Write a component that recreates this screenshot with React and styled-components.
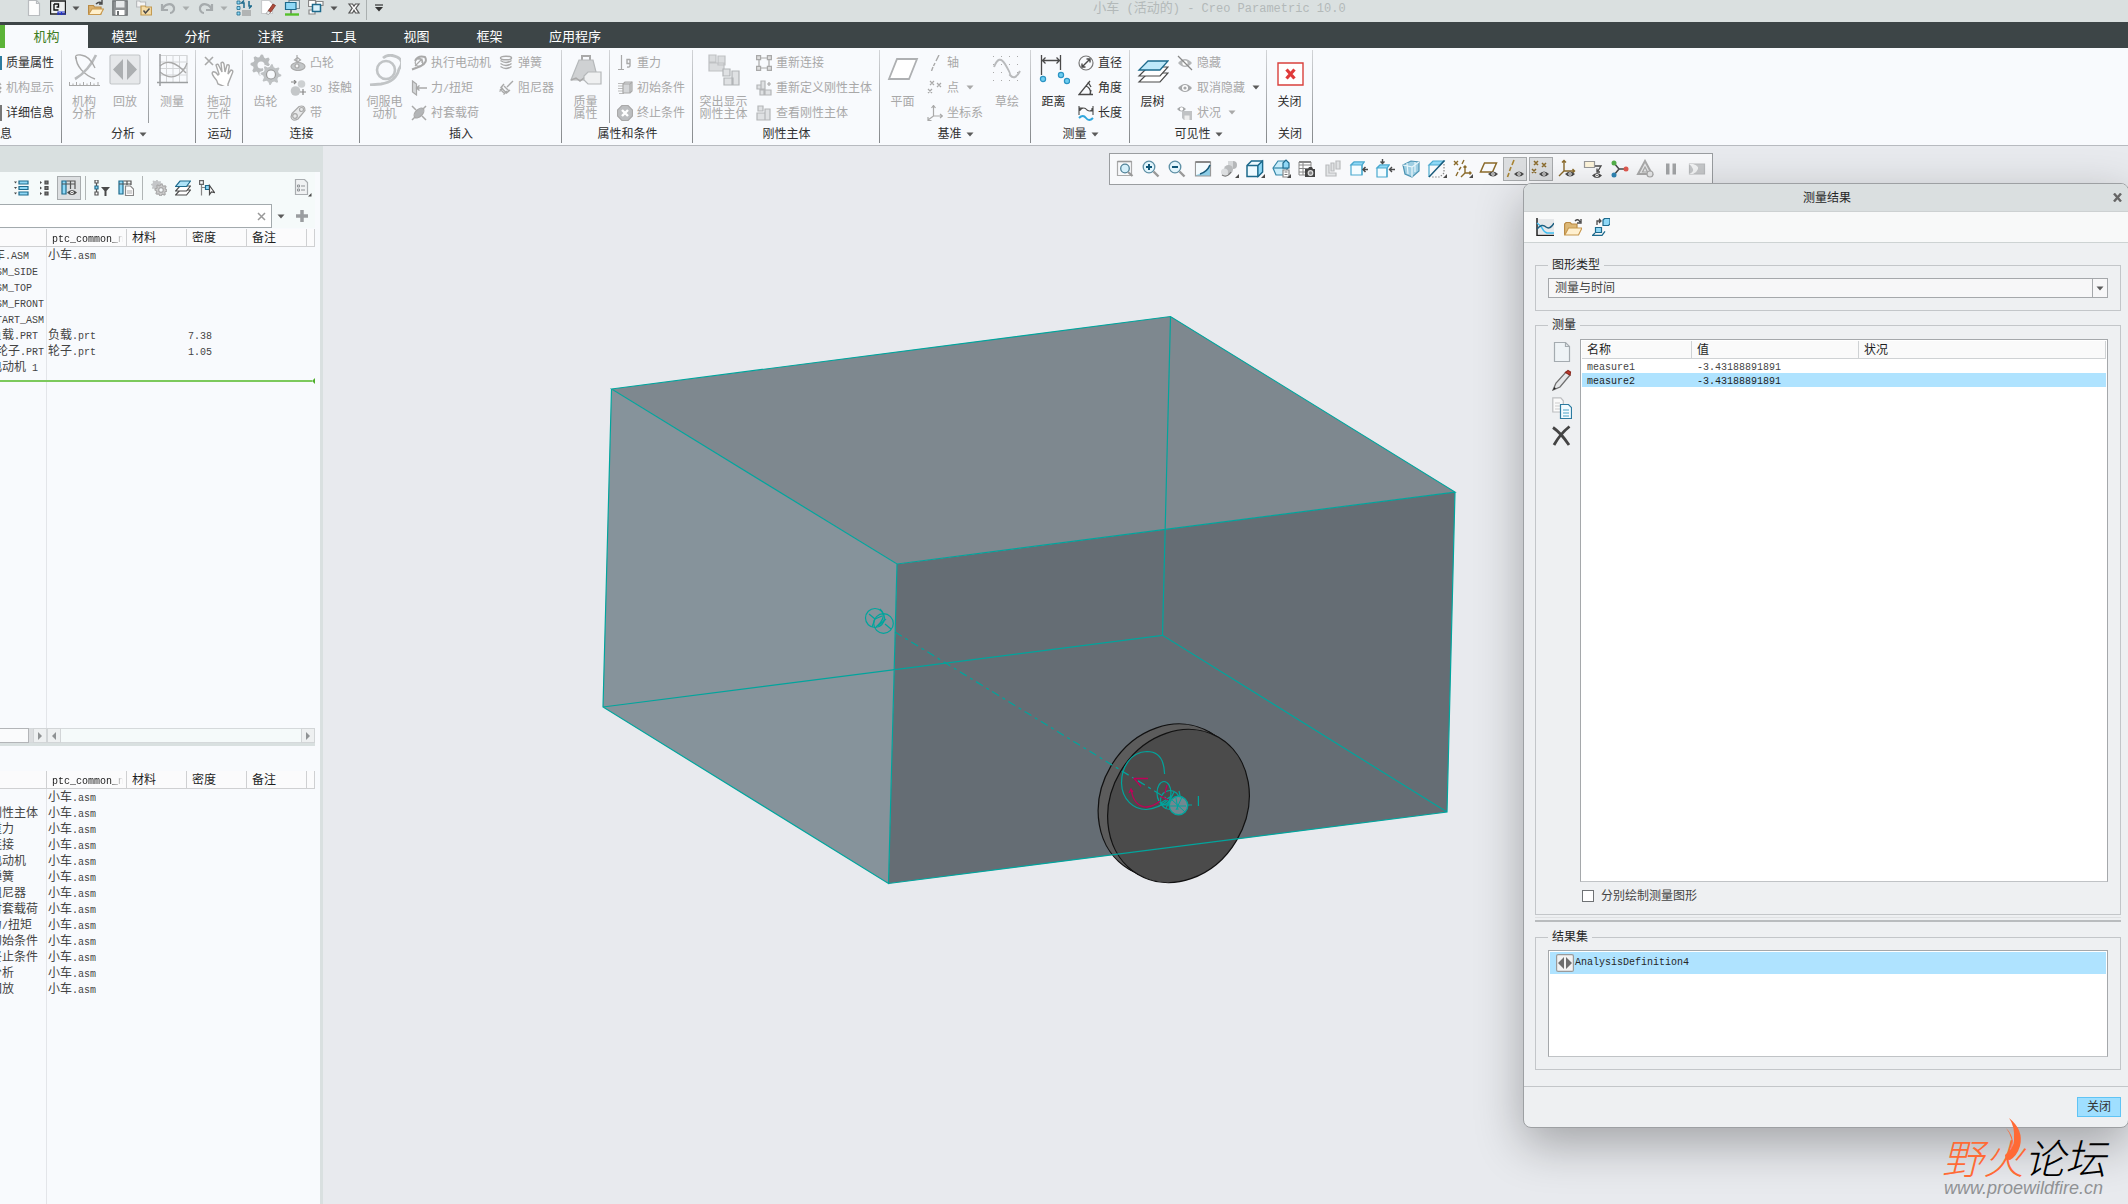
import React from "react";
import styled, { createGlobalStyle, css } from "styled-components";

const CJK = `"Liberation Sans", "Noto Sans CJK SC", sans-serif`;
const MONO = `"Liberation Mono", "Noto Sans CJK SC", monospace`;

const Global = createGlobalStyle`
  *, *::before, *::after { box-sizing: border-box; }
  html, body { margin: 0; padding: 0; }
  body { font-family: ${CJK}; font-size: 12px; line-height: 16px; color: #3c3c3c; background: #e8eaee; overflow: hidden; }
  button { font: inherit; color: inherit; border: 0; padding: 0; margin: 0; background: none; cursor: pointer; }
  svg { display: block; flex: none; }
`;

/* ---------- text ---------- */
const Latin = styled.span`
  font-family: ${MONO};
  font-size: ${(p) => p.$size || 10}px;
  line-height: 0;
  white-space: pre;
`;
const T = ({ children, size }) =>
  String(children)
    .split(/([\x20-\x7e]+)/)
    .filter(Boolean)
    .map((s, i) =>
      /^[\x20-\x7e]+$/.test(s) ? (
        <Latin key={i} $size={size}>{s}</Latin>
      ) : (
        <React.Fragment key={i}>{s}</React.Fragment>
      )
    );

/* ---------- icons ---------- */
const G = "#a9a9a9";
const L = "#d4d6d8";
const D = "#4a4a4a";
const B = "#1d6a8c";
const C = "#8fd8f6";

const Svg = ({ s = 16, w, h, vb, children }) => (
  <svg width={w || s} height={h || s} viewBox={vb || `0 0 ${s} ${s}`} fill="none" stroke={G} strokeWidth="1.2" aria-hidden="true">
    {children}
  </svg>
);
const Eye = ({ x = 8, y = 11 }) => (
  <g transform={`translate(${x} ${y})`} stroke="none">
    <path d="M0 3Q5-2 10 3Q5 8 0 3Z" fill={D} />
    <circle cx="5" cy="3" r="1.7" fill="#fff" />
    <circle cx="5" cy="3" r=".8" fill={D} />
  </g>
);
const Corner = () => <path d="M20 15v4h-4z" fill={D} stroke="none" />;
const Caret = ({ c = "#5a5a5a" }) => (
  <svg width="8" height="5" viewBox="0 0 8 5" aria-hidden="true"><path d="M0.5 0.5h7L4 4.5z" fill={c} /></svg>
);

const cog = (cx, cy, r, n = 8) => {
  const pts = [];
  for (let i = 0; i < n * 4; i++) {
    const a = (i / (n * 4)) * Math.PI * 2;
    const rr = i % 4 < 2 ? r : r * 0.76;
    pts.push(`${(cx + rr * Math.cos(a)).toFixed(1)},${(cy + rr * Math.sin(a)).toFixed(1)}`);
  }
  return pts.join(" ");
};

const I = {
  page: <Svg><path d="M2.5.5h8l3 3v12h-11z" fill="#fdfdfd" stroke="#b9bcbf" /><path d="M10.500.5v3h3" stroke="#b9bcbf" /></Svg>,
  logo: <Svg><path d="M.5 1h15v13H.5z" fill="#eef0f0" stroke="#222" strokeWidth="1.4" /><path d="M4 4h4.500v3H6.500M4 4v6h4.500" stroke="#111" strokeWidth="1.4" /><path d="M8 15v-3h7M8 14h8M11.500 12v3" stroke="#2030d0" strokeWidth="1.2" /></Svg>,
  folder: <Svg><path d="M.5 14V5.500h5l1 1.500H13v7z" fill="#d9b06c" stroke="#b98a45" /><path d="M.5 14.500L4 9h11.500l-3 5.500z" fill="#fff0cc" stroke="#c8994f" /><path d="M8 4q3-3 6-1M14 0v4h-3" stroke={D} strokeWidth="1.4" /></Svg>,
  save: <Svg><path d="M.8.800h14.400v14.400H.8z" fill="#8d9193" stroke="#6c7072" /><path d="M4 1h8.500v6.500H4z" fill="#e6e9ea" stroke="none" /><path d="M3.500 10h9V15h-9z" fill="#fff" stroke="none" /><path d="M5 11h2v4H5z" fill="#6c7072" stroke="none" /></Svg>,
  openCheck: <Svg><path d="M.6 7V1h3l1 1h5v5z" fill="#f4f4f4" stroke="#b7babc" /><path d="M5 15V6h4l1 1h5.500v8z" fill="#f5dca6" stroke="#c39b52" /><path d="M7.500 10.500l2 2.500 4-4.500" stroke={D} strokeWidth="1.500" /></Svg>,
  undo: <Svg><path d="M2 4v6h6M2.500 9.500C4 4 12 2 14 7.500c.5 3-1.500 5.500-4 5.500" stroke="#a6abad" strokeWidth="2.200" /></Svg>,
  redo: <Svg><path d="M14 4v6H8M13.500 9.500C12 4 4 2 2 7.500c-.5 3 1.500 5.500 4 5.500" stroke="#a6abad" strokeWidth="2.200" /></Svg>,
  regen: <Svg><path d="M1 1h3v3H1zM1 6.500h3v3H1zM1 12h3v3H1z" fill={C} stroke={B} strokeWidth=".8" /><path d="M6 11h9M6 13h9M6 15h9" stroke="#888" /><path d="M8 8V3H5.500L8 .5M13 1v5h2.500L13 8.500" stroke={B} strokeWidth="1.500" /></Svg>,
  erase: <Svg><path d="M1.500.5h8l3 3v10h-11z" fill="#fff" stroke="#c9cbcd" /><path d="M8 11l5-7 2.500 1.500-5 7z" fill="#b04a3a" stroke="#7a3228" strokeWidth=".8" /><path d="M8 11l2.500 1.500-2 2-2.500-1z" fill="#ececec" stroke="#888" strokeWidth=".6" /></Svg>,
  windows: <Svg><path d="M5 .5h10.500v8H5z" fill="#dfe8ec" stroke="#7d8d94" /><path d="M1.500 2.500h10.500v7H1.500z" fill="#8fd8f6" stroke={B} /><path d="M7 10v4" stroke={D} /><path d="M1 14.500h14" stroke="#55c02a" strokeWidth="2.400" /></Svg>,
  cascade: <Svg><path d="M.5.5h7v6h-7z" fill="#fff" stroke="#888" /><path d="M8 1.500h7v4H8zM1 10h6v4H1z" fill="#fff" stroke="#888" /><path d="M4.500 4.500h8v7h-8z" fill="#d8f1fb" stroke={B} strokeWidth="1.500" /></Svg>,
  closeWin: <Svg><path d="M3 4h3.500L8 6.200 9.500 4H13l-3.200 4.200L13 13H9.500L8 10.200 6.500 13H3l3.200-4.800z" fill="#fff" stroke="#555" /></Svg>,
  /* ribbon 32 */
  mechAnalysis: <Svg s={32}><path d="M8 3C8 12 16 21 27 25" stroke={G} strokeWidth="1.500" /><path d="M28 1C24 10 16 20 7 25" strokeWidth="2.600" stroke="#b9bbbd" /><path d="M8 5q-2-5 5-4 9 1 14 13" strokeWidth="1.300" /><path d="M1 31.500h31M1.500 28v3M5 29.500v2M8.500 28v3M12 29.500v2M15.500 28v3M19 29.500v2M22.500 28v3M26 29.500v2M30 28v3" strokeWidth="1" /></Svg>,
  playback: <Svg s={32}><rect x="1" y="1" width="30" height="29" rx="1.500" fill="#e6e8ea" stroke="#c2c5c8" /><path d="M14 5v21L4 15.500zM18 5v21l10-10.500z" fill="#acafb1" stroke="none" /></Svg>,
  measureGraph: <Svg s={32}><path d="M4 1.500h27v27M10.500 1v28M17 1v28M23.500 1v28M31 1v28M4 8h27M4 14.500h27M4 21h27" stroke={L} strokeWidth="1" /><path d="M4 12Q14 2 30 19M4 18q10 8 18 3 7-5 9-12" strokeWidth="1.300" /><path d="M4 0v32M1 28.500h31" strokeWidth="1.500" stroke="#9c9fa1" /></Svg>,
  drag: <Svg s={32}><path d="M2 3l8 8M10 3l-8 8" strokeWidth="1.600" /><path d="M15 30q-1-4-4-7-3-4-1-5t5 3l1-1-3-9q2-2 3 1l3 6-1-9q2-2 3 1l1 8 2-7q3-1 2 3l-1 6 3-4q3 0 1 4l-4 10v4z" fill="#fff" strokeWidth="1.400" /></Svg>,
  gears: <Svg s={32}><polygon points={cog(11, 11, 10.5)} fill="#b9bcbe" stroke="none" /><circle cx="11" cy="11" r="3.500" fill="#f8fafd" stroke="none" /><polygon points={cog(21, 20.5, 11)} fill="#bfc2c4" stroke="#f8fafd" /><circle cx="21" cy="20.500" r="4.500" fill="#f8fafd" stroke="#999" /></Svg>,
  servo: <Svg s={32}><path d="M14 4Q20-1 28 3t2 12q-3 13-18 15L1 31" strokeWidth="2.800" stroke="#c1c4c6" /><circle cx="17" cy="16" r="9" strokeWidth="2.600" stroke="#c1c4c6" /></Svg>,
  massProps: <Svg s={32}><path d="M12 6V2h8v4" strokeWidth="2" /><path d="M9 6h14l5 20H1z" fill="#cfd1d3" stroke="#b5b8ba" /><path d="M1 26l5-2 4 3 4-3 3 2" strokeWidth="1.500" /><path d="M14 22l4-4h13v12H18l-4-4z" fill="#eff0f1" stroke="#b5b8ba" /></Svg>,
  highlight: <Svg s={32}><path d="M1 1h7v7H1zM1 9h15v8H1zM10 2h7v9h-7z" fill="#dadcde" stroke="#bfc1c3" /><path d="M15 15h7v7h-7zM16 24h9v7h-9zM24 17h7v14h-7z" fill="#dfe1e3" stroke="#b2b5b7" /></Svg>,
  plane: <Svg s={32}><path d="M10 5h20l-8 20H2z" fill="#fff" stroke="#aeb0b2" strokeWidth="1.800" /></Svg>,
  sketch: <Svg s={32}><g fill="#aaa" stroke="none">{[2, 10, 18, 26].flatMap((x) => [2, 10, 18, 26].map((y) => <rect key={x + "-" + y} x={x} y={y} width="1" height="1" />))}</g><path d="M3 13Q8 0 14 10t5 11q5 6 10-4" strokeWidth="2" stroke="#b9bbbd" /></Svg>,
  distance: <Svg s={32}><path d="M3.500 1v20M22.500 1v15M4 6.500h18M7.500 3.500l-3 3 3 3M18.500 3.500l3 3-3 3" stroke={D} strokeWidth="1.300" /><g fill="#6fcdf0" stroke="#2b94c4"><circle cx="5" cy="25" r="2.600" /><circle cx="23" cy="21" r="2.600" /><circle cx="29" cy="27" r="2.600" /></g></Svg>,
  layers: <Svg s={32}><path d="M11 19h20l-8 9H2z" fill="#fff" stroke={D} /><path d="M11 13h20l-8 9H2z" fill="#fff" stroke={D} /><path d="M11 7h20l-8 9H2z" fill="#bfe9fa" stroke={B} strokeWidth="1.300" /></Svg>,
  close: <Svg s={32}><path d="M4 9h25v22H4z" fill="#fff" stroke="#d9403c" strokeWidth="1.400" /><path d="M12.500 15.500l8 9M20.500 15.500l-8 9" stroke="#e03a3a" strokeWidth="3.200" /></Svg>,
  /* ribbon 16 */
  rMass: <Svg><path d="M0 1h16v14H0z" fill="#2c7ba0" stroke="none" /></Svg>,
  rShow: <Svg><path d="M8 2l7 6-7 6M13 2l2 3M13 14l2-3" /></Svg>,
  rInfo: <Svg><path d="M1 1h14v14H1z" fill="#ddd" stroke="#777" strokeWidth="2" /></Svg>,
  cam: <Svg><ellipse cx="8" cy="11.500" rx="7" ry="4" fill="#c3c6c8" stroke="#aaa" /><circle cx="7" cy="11" r="2" fill="#f4f4f4" /><path d="M7 0v6M4.500 5l3-2.500 3 2.500-3 2z" /></Svg>,
  contact: <Svg><circle cx="5.500" cy="11" r="4.800" fill="#c4c7c9" stroke="none" /><circle cx="11.500" cy="4" r="3.800" fill="#cdd0d2" stroke="none" /><path d="M1 2h5M4 0l2 2-2 2M13 9v6M10 12h6" stroke="#888" /></Svg>,
  belt: <Svg><path d="M2 8.500L9 1.500q6-2 6 4L8 14q-6 3-7-2z" fill="#e8e9ea" /><circle cx="5" cy="11" r="2.300" /><circle cx="11.500" cy="4.500" r="2" /></Svg>,
  exec: <Svg><path d="M4 6Q7 0 14 2q3 5-4 9L1 14.500" strokeWidth="2" /><path d="M4 11l7-7M7 4h4v4" /><circle cx="8" cy="7.500" r="3.800" /></Svg>,
  force: <Svg><path d="M1.500 1l4 3v11l-4-3z" fill="#d4d6d8" /><path d="M16 8H5M8.500 5.500L5.500 8l3 2.500" strokeWidth="1.400" /></Svg>,
  bushing: <Svg><path d="M1 1l4 4M15 15l-4-4M15 1l-3 3M1 15l4-4" strokeWidth="1.500" /><ellipse cx="8" cy="8" rx="6" ry="3.500" transform="rotate(-45 8 8)" fill="#b3b5b7" /></Svg>,
  spring: <Svg><g strokeWidth="1.500"><ellipse cx="8" cy="3" rx="5.500" ry="1.800" /><path d="M2.500 5.500q5.500 4 11 0M2.500 8.500q5.500 4 11 0M2.500 11.500q5.500 4 11 0" /></g></Svg>,
  damper: <Svg><path d="M15 1L9 7M6 6l5 5M2 9l5 5M5 8l-3.500 3.500M9 11l-3.500 3.500M6 4L3 7.500 8.500 13l3.500-3" strokeWidth="1.400" /></Svg>,
  gravity: <Svg><path d="M4.500 0v14M1 14.500h6" /><path d="M13 4v6.500q0 2-3 1.500M13 4.500h-3v4h3" strokeWidth="1.400" /></Svg>,
  initial: <Svg><path d="M1 3.500h6M1 6h5M1 8.500h5M1 11h5M2 13.500h5" stroke="#bbb" /><path d="M6 4l2-2h7v9l-2 2H6z" fill="#d4d6d8" /><path d="M6 4h7v9M13 4l2-2" /></Svg>,
  stop: <Svg><path d="M5 .5h6L15.500 5v6L11 15.500H5L.5 11V5z" fill="#bcbec0" /><path d="M5 5l6 6M11 5l-6 6" stroke="#fff" strokeWidth="2.400" /></Svg>,
  reconnect: <Svg><path d="M3 3h10v10H3z" /><g fill="#ddd"><path d="M.6.600h4v4h-4zM11.400.600h4v4h-4zM.6 11.400h4v4h-4zM11.400 11.400h4v4h-4z" /></g></Svg>,
  redefine: <Svg><g fill="#dfe1e3" stroke="#b4b6b8"><path d="M1 5h4v4H1zM5 1h4v8H5zM4 10h4v5H4zM9 10h6v5H9z" /></g><path d="M11 4h4M13 2v4" /></Svg>,
  viewBody: <Svg><g fill="#dfe1e3" stroke="#b4b6b8"><path d="M2 1h5v5H2zM1 8h8v7H1zM9 4h5v11H9z" /></g></Svg>,
  axis: <Svg><path d="M12 0L9 6M8 8l-1.500 3M6 12l-1.500 4" strokeWidth="1.400" /></Svg>,
  point: <Svg><path d="M3 1l4 4M7 1L3 5M10 3l4 4M14 3l-4 4M1 9l4 4M5 9l-4 4" /></Svg>,
  csys: <Svg><path d="M6.500 1v10H15M6.500 11L1 15M4.500 3l2-2.500L8.500 3M13 9l2.500 2L13 13M1 12v3.500h3.500" /></Svg>,
  diameter: <Svg><circle cx="8" cy="8" r="7" stroke="#777" /><path d="M4 12l8-8M8.500 4H12v3.500M4 8.500V12h3.500" stroke={D} strokeWidth="1.400" /></Svg>,
  angle: <Svg><path d="M12 1L1 14.500h14M8 6q5 2 4.500 8M10 2l3 5M13 10l-1 4" stroke={D} strokeWidth="1.300" /></Svg>,
  length: <Svg><path d="M1 1v9M15 1v9M2 5q4-4 7 0 3 2 5 0M5 3H2v3M14 3v3h-3" stroke={D} strokeWidth="1.100" /><path d="M1 13q4-4 7 0t7 0" stroke="#2fa6dc" strokeWidth="2" /></Svg>,
  hide: <Svg><path d="M1 8q7-8 14 0-7 8-14 0z" fill="#b4b6b8" stroke="none" /><circle cx="8" cy="8" r="2.600" fill="#fff" stroke="none" /><path d="M1 1l14 14" stroke="#888" /></Svg>,
  unhide: <Svg><path d="M1 8q7-8 14 0-7 8-14 0z" fill="#a6a8aa" stroke="none" /><circle cx="8" cy="8" r="3" fill="#fff" stroke="none" /><circle cx="8" cy="8" r="1.600" fill="#a6a8aa" stroke="none" /></Svg>,
  status: <Svg><path d="M0 4q4.500-5 9 0-4.500 5-9 0z" fill="#a6a8aa" stroke="none" /><circle cx="4.500" cy="4" r="1.700" fill="#fff" stroke="none" /><path d="M5 6h10v9H7l-2-2z" fill="#c0c2c4" stroke="none" /><path d="M7.500 10.500h5V15h-5z" fill="#eee" stroke="none" /></Svg>,
  /* side tool bar */
  expand: <Svg><g fill={C} stroke={B}><path d="M6 1h9v3H6zM6 6.500h9v3H6zM6 12h9v3H6z" /></g><path d="M1 1.500h3L2.500 3.500zM1 7h3L2.500 9zM1 12.500h3L2.500 14.500z" fill={D} stroke="none" /></Svg>,
  collapse: <Svg><g fill="#777" stroke={D}><path d="M8 1h3v3H8zM8 6.500h3v3H8zM8 12h3v3H8z" /></g><path d="M3 1v3l2-1.500zM3 6.500v3l2-1.500zM3 12v3l2-1.500z" fill={D} stroke="none" /></Svg>,
  columns: <Svg><path d="M1 1h4v13H1z" fill={C} stroke={B} /><path d="M5.500 1H14v8M1 4h13M9.500 1v8" stroke="#555" /><Eye x={6} y={9.500} /></Svg>,
  filter: <Svg><path d="M1 0h3v3H1zM1 12h3v3H1z" fill="#fff" stroke="#555" /><path d="M1 6h3v3H1z" fill={C} stroke={B} /><path d="M2.500 3v3M2.500 9v3" stroke="#555" /><path d="M7 7h9l-3.500 4v5h-2v-5z" fill={D} stroke="none" /></Svg>,
  colPage: <Svg><path d="M1 1h4v13H1z" fill={C} stroke={B} /><path d="M5.500 1H13v4M1 4h12M9 1v4" stroke="#555" /><path d="M7.500 6h5l3 3v6.500h-8z" fill="#fff" stroke="#888" /><path d="M9 11h5M9 13h5" stroke="#aaa" /></Svg>,
  gearsGray: <Svg><polygon points={cog(5.5, 5, 5.5)} fill="#c4c6c8" stroke="none" /><polygon points={cog(10, 10, 6)} fill="#ccc" stroke="#aaa" /><circle cx="10" cy="10" r="2.300" fill="#f6fafb" /></Svg>,
  layersS: <Svg><path d="M5 10h10.500l-4 5H.5z" fill="#fff" stroke={D} /><path d="M5 6h10.500l-4 5H.5z" fill="#fff" stroke={D} /><path d="M5 1h10.500l-4 5.500H.5z" fill="#aee3f8" stroke={B} /></Svg>,
  treePick: <Svg><path d="M.6.600h3.800v3.800H.6z" fill="#fff" stroke="#666" /><path d="M2.500 5v10.500M2.500 7.500H6" stroke="#888" /><path d="M6.500 5.500h4v4h-4z" fill={C} stroke={B} /><path d="M10.500 5.500v9l2-2.500 3 .5z" fill="#fff" stroke={D} /></Svg>,
  settings: <Svg s={18}><path d="M1.500.5h9l3 3v12h-12z" fill="#f0f2f3" stroke="#a9adb0" /><path d="M7 7h4M7 11h4M3.500 6h2v2h-2zM3.500 10h2v2h-2z" stroke="#8f9396" strokeWidth="1" /><path d="M17.500 14v3.500H14z" fill={D} stroke="none" /></Svg>,
  /* dialog */
  graph: <Svg s={18}><path d="M1 1h17v15H1z" fill="#e6e8ea" stroke="none" /><path d="M1 0v17.500h17" stroke="#222" strokeWidth="1.500" /><path d="M1 5q3 2 5 5 2 4 5 5h7" stroke="#3fbdf0" strokeWidth="1.500" /><path d="M1 11Q6 5 10 9q4 3 8-4" stroke="#1f5f80" strokeWidth="1.500" /></Svg>,
  folderBig: <Svg s={18}><path d="M.6 16.500V6l1.500-1.500h4L7.500 6H13v10.500z" fill="#dcb877" stroke="#b98a45" /><path d="M.8 17l3.700-7H18l-3.500 7z" fill="#fff0cf" stroke="#c8994f" /><path d="M11 3q3-3 5 1M17 1v4h-4" stroke={D} strokeWidth="1.400" /></Svg>,
  transfer: <Svg s={18}><path d="M11 2l1.500-1.500H18V6l-1.500 1.500H11z" fill={C} stroke={B} /><path d="M5 7V3h4M7 .8L9 3 7 5" stroke={D} strokeWidth="1.300" /><path d="M3.500 9.500h6v5h-6z" fill={C} stroke={B} /><path d="M3 15l-2.500 2.300H10l3-4" stroke={B} strokeWidth="1.300" /></Svg>,
  pageBig: <Svg w={20} h={22} vb="0 0 20 22"><path d="M2.500 1.500h11l4 4v15h-15z" fill="#eef3f6" stroke="#a4abb0" /><path d="M13.500 1.500v4h4" stroke="#a4abb0" /></Svg>,
  pencil: <Svg w={20} h={22} vb="0 0 20 22"><path d="M1 21l3-7L14 3l4 3L8 18z" fill="#e4e6e8" stroke="#6f6f6f" strokeWidth="1.300" /><path d="M13.500 3.500L16 1.500l2.500 1.500-.5 3z" fill="#c23b2c" stroke="#8c2a20" /><path d="M1 21l1.500-3 1.500 1.500z" fill="#222" stroke="none" /></Svg>,
  copy: <Svg w={20} h={22} vb="0 0 20 22"><path d="M.8.800h8l2.500 3V15H.8z" fill="#fafafa" stroke="#bcbec0" /><path d="M3 6h5M3 9h5M3 12h5" stroke="#ccc" /><path d="M8.500 7.500h8l3 3v11h-11z" fill="#f3fbff" stroke="#2c7ba0" /><path d="M11 13h6M11 16h6M11 19h6" stroke="#4aa3c8" /></Svg>,
  del: <Svg w={20} h={22} vb="0 0 20 22"><path d="M1 2.500Q9 8 17 20M17.500 1.500Q8 9 2 20" stroke="#444" strokeWidth="2.800" /></Svg>,
  result: <Svg s={18}><rect x=".6" y=".6" width="16.800" height="16.800" rx="1.500" fill="#f2f2f2" stroke="#9a9a9a" /><path d="M8 3v12L2 9zM10 3v12l6-6z" fill="#6d6d6d" stroke="none" /></Svg>,
};

/* graphics tool bar icons, 20px */
const V = [
  [<><path d="M2.500 2.500h14v14h-14z" stroke="#aaa" /><path d="M2.500 2.500h14" stroke="#999" strokeWidth="1.600" /><circle cx="10" cy="9.500" r="4.300" fill="#d4effa" stroke="#4f8298" strokeWidth="1.300" /><path d="M13 13l4.500 4" stroke="#999" strokeWidth="2.200" /></>],
  [<><circle cx="8" cy="8" r="5.800" fill="#e2f5fc" stroke="#5d8fa5" strokeWidth="1.300" /><path d="M5 8h6M8 5v6" stroke="#0f5678" strokeWidth="2" /><path d="M12.500 12.500l5 5" stroke="#999" strokeWidth="2.400" /></>],
  [<><circle cx="8" cy="8" r="5.800" fill="#e2f5fc" stroke="#5d8fa5" strokeWidth="1.300" /><path d="M5 8h6" stroke="#0f5678" strokeWidth="2" /><path d="M12.500 12.500l5 5" stroke="#999" strokeWidth="2.400" /></>],
  [<><path d="M2.500 3h15v14h-15z" fill="#8ecde6" stroke="#999" /><path d="M3 4h14q-1 6-6 9-3 2-8 3z" fill="#f4fbfe" stroke="none" /><path d="M2.500 3h15" stroke="#888" strokeWidth="2" /><path d="M7 15q7-2 10-9" stroke="#17597a" strokeWidth="1.600" /></>],
  [<><circle cx="14" cy="6" r="4" fill="#b5b7b9" stroke="none" /><path d="M9 2h5v9H9z" fill="#d6d8da" stroke="none" /><circle cx="9.500" cy="10.500" r="4.500" fill="#b9bbbd" stroke="none" /><circle cx="5.500" cy="13" r="3.500" fill="#dcdee0" stroke="none" /><path d="M3 16q5 3 9-3" stroke="#777" /><Corner /></>],
  [<><path d="M2 6.500L6.500 2h11v11L13 17.500H2z" fill="#eefaff" stroke={B} strokeWidth="1.500" /><path d="M2 6.500h11v11M13 6.500L17.500 2" stroke={B} strokeWidth="1.500" /><path d="M13 6.500L17.500 2v11L13 17.500z" fill={C} stroke={B} /><Corner /></>],
  [<><path d="M2 9l5-7h7l3 7-5 7H5z" fill="#c9edfa" stroke="#3486a8" /><path d="M2 9h15" stroke="#3486a8" /><path d="M12 9V4l3-3 3 3v5z" fill={C} stroke={B} /><path d="M12 11h6v7h-6z" fill="#fff" stroke="#888" /><path d="M13.500 13h3M13.500 15.500h3" stroke="#777" /><Corner /></>],
  [<><path d="M2 3h12v13H2zM2 6h12M2 9.500h12M2 13h12M6 3v13" fill="#fff" stroke="#888" strokeWidth="1" /><path d="M2 3h12" stroke="#888" strokeWidth="2" /><path d="M8 10h3l1-2h3l1 2h2v8H8z" fill="#444" stroke="none" /><circle cx="13.500" cy="14" r="2.300" fill="#888" stroke="#ddd" /></>],
  [<><path d="M3 6h3v8h7v3H3z" fill="#e3e5e7" stroke="#b9bbbd" /><path d="M8 4h3v8H8zM13 2h4v8h-4z" fill="#e0e2e4" stroke="#b9bbbd" /></>],
  [<><path d="M2 6l3-3h10l-2 3v10H2z" fill="#f4fcff" stroke="#4aa9cf" /><path d="M2 6l3-3h10l-2 3z" fill={C} stroke="#4aa9cf" /><path d="M13 6v10" stroke="#4aa9cf" /><path d="M19 10.500h-5M16.500 8l-2.500 2.500 2.500 2.500" stroke={D} strokeWidth="1.500" /></>],
  [<><path d="M2 9l3-3h9l-2 3v9H2z" fill="#f4fcff" stroke="#4aa9cf" /><path d="M2 9l3-3h9l-2 3z" fill={C} stroke="#4aa9cf" /><path d="M12 9v9" stroke="#4aa9cf" /><path d="M20 10.500h-5M17 8l-2.500 2.500L17 13M7.500 0v4M5.500 2.500l2 2 2-2" stroke={D} strokeWidth="1.400" /></>],
  [<><path d="M2 6l8-4 8 1v9l-7 6-7-3z" fill="#9fcfe3" stroke="#4d94b3" /><path d="M2 6l9 2v10M11 8l7-5M6 4l1 11M14 3v10" stroke="#e8f6fb" /></>],
  [<><path d="M2 6l4-4h11l-4 4z" fill={C} stroke="#4aa9cf" /><path d="M2 6v12" stroke="#4aa9cf" /><path d="M17 5v9l-4 4H4" stroke="#888" strokeDasharray="1.500 1.500" /><path d="M2 18L17.500 1.500" stroke="#17597a" strokeWidth="1.500" /><Corner /></>],
  [<><path d="M1 2l4 4M5 2L1 6M11 1L9 5M8 8l-2 3M5 13l-2 4M12 7v7h6M12 14l-4 4M10.500 8.500L12 7l1.500 1.500M16.500 12.500L18 14l-1.500 1.500" stroke="#8a6a2a" strokeWidth="1.400" /><Corner /></>],
  [<><path d="M5.500 4h12l-4 9H1.500z" stroke="#8a6a2a" strokeWidth="1.500" /><Eye x={9} y={12} /></>],
  [<><path d="M9 1L7 6M6 8l-1.500 4M4 14l-1.500 4" stroke="#a98432" strokeWidth="1.600" /><Eye x={9} y={12} /></>, true],
  [<><path d="M3 2l4 4M7 2L3 6M11 4l4 4M15 4l-4 4M1 10l4 4M5 10l-4 4" stroke="#8a6a2a" strokeWidth="1.500" /><Eye x={8} y={12} /></>, true],
  [<><path d="M7 2v10h10M7 12l-5 5M5 3.500L7 1.500l2 2M15.500 10l2 2-2 2" stroke="#8a6a2a" strokeWidth="1.400" /><Eye x={8} y={12} /></>],
  [<><path d="M1.500 2.500h10v6h-10z" fill="#fff6dc" stroke="#999" /><path d="M12 7h6l-3 5M14 9.500v3.500h3" stroke={D} strokeWidth="1.300" /><Eye x={9} y={13.500} /></>],
  [<><path d="M10 10L5 4M10 10h7M10 10l-5 6" stroke={D} strokeWidth="1.500" /><circle cx="5" cy="4" r="2.500" fill="#55b04a" stroke="none" /><circle cx="17" cy="10" r="2.500" fill="#e05a50" stroke="none" /><circle cx="5" cy="16" r="2.500" fill="#2f86b5" stroke="none" /></>],
  [<><path d="M10 2l7 13H3z" fill="#e9eaeb" stroke="#aaa" strokeWidth="2" /><path d="M10 8l2.500 5h-5z" stroke="#aaa" /><circle cx="15" cy="15" r="3" fill="#e9eaeb" stroke="#aaa" /></>],
  [<path d="M5 4.500h3.500v11H5zM11.500 4.500H15v11h-3.500z" fill="#a3a5a7" stroke="none" />],
  [<><path d="M2.500 5h15v10h-15z" fill="#c6c8ca" stroke="#b9bbbd" /><path d="M2 5h4q6 2 5 5t-5 5H2q5-2 4-5T2 5z" fill="#f3f4f5" stroke="none" /></>],
];

/* ---------- shell ---------- */
const Shell = styled.div`
  position: relative;
  display: flex;
  flex-direction: column;
  min-height: 100vh;
  overflow: hidden;
`;
const TitleBar = styled.header`
  display: flex;
  height: 22px;
  background: #dae0e0;
  padding-left: 22px;
`;
const Quick = styled.div`display: flex; align-items: flex-start;`;
const QuickBtn = styled.button`
  display: grid;
  place-items: center;
  width: ${(p) => (p.$arrow ? 12 : 24)}px;
  height: 16px;
  margin-right: ${(p) => (p.$arrow ? 2 : 0)}px;
`;
const QuickSep = styled.span`width: 1px; height: 20px; background: #aab0b0; margin-right: 6px;`;
const Title = styled.h1`
  flex: 1;
  margin: 0;
  padding-right: 76px;
  text-align: center;
  font: 400 13px/16px ${CJK};
  color: #b3b9b9;
`;

const Tabs = styled.nav`
  display: flex;
  align-items: flex-end;
  height: 26px;
  background: #3d4547;
`;
const FileTab = styled.button`width: 5px; height: 23px; background: #5cb338;`;
const Tab = styled.button`
  min-width: ${(p) => (p.$active ? 83 : 73)}px;
  height: 23px;
  padding: 0 23px;
  font-size: 13px;
  line-height: 23px;
  color: ${(p) => (p.$active ? "#3d7d22" : "#fff")};
  background: ${(p) => (p.$active ? "#f8fafd" : "transparent")};
`;

const RibbonBar = styled.div`
  display: flex;
  height: 98px;
  padding: 2px 0;
  background: #f8fafd;
  border-bottom: 1px solid #b7babf;
`;
const Group = styled.section`
  flex: none;
  display: flex;
  flex-direction: column;
  width: ${(p) => p.$w}px;
  background: linear-gradient(#d3d5d8, #85888b) right / 1px 100% no-repeat;
`;
const GroupBody = styled.div`display: flex; height: 77px;`;
const GroupLabel = styled.div`
  display: flex;
  align-items: center;
  justify-content: ${(p) => (p.$start ? "flex-start" : "center")};
  gap: 4px;
  height: 18px;
  color: #2f2f2f;
`;
const SubSep = styled.span`
  width: 1px;
  height: 73px;
  margin-left: ${(p) => p.$gap || 0}px;
  background: linear-gradient(#d3d5d8, #999c9f);
`;
const Big = styled.button`
  display: flex;
  flex-direction: column;
  align-items: center;
  gap: 10px;
  width: ${(p) => p.$w}px;
  padding-top: 4px;
  line-height: 12px;
  white-space: pre;
  color: ${(p) => (p.$on ? "#2f2f2f" : "#a8a8a8")};
`;
const Col = styled.div`
  display: grid;
  grid-template-rows: repeat(3, 25px);
  align-content: start;
  padding-left: ${(p) => p.$pad ?? 2}px;
  margin-left: ${(p) => (p.$clip ? -16 : 0)}px;
`;
const Small = styled.button`
  display: flex;
  align-items: center;
  gap: 4px;
  white-space: nowrap;
  color: ${(p) => (p.$on ? "#2f2f2f" : "#a8a8a8")};
  & > svg:last-child:not(:first-child) { margin-left: 3px; }
`;

const BigBtn = ({ icon, label, w, on }) => (
  <Big $w={w} $on={on}>{I[icon]}<span>{label}</span></Big>
);
const Rows = ({ items, pad, clip }) => (
  <Col $pad={pad} $clip={clip}>
    {items.map(([icon, label, on, caret]) => (
      <Small key={label} $on={on}>
        {I[icon]}<span><T>{label}</T></span>{caret && <Caret c={caret} />}
      </Small>
    ))}
  </Col>
);
const RGroup = ({ w, label, caret, start, children }) => (
  <Group $w={w}>
    <GroupBody>{children}</GroupBody>
    <GroupLabel $start={start}>{label}{caret && <Caret />}</GroupLabel>
  </Group>
);

/* ---------- workspace ---------- */
const Work = styled.main`flex: 1; display: flex; min-height: 0;`;
const Side = styled.aside`
  flex: none;
  display: flex;
  flex-direction: column;
  width: 323px;
  padding: 26px 3px 0 0;
  background: #d9e0e0;
`;
const SideInner = styled.div`
  flex: 1;
  display: grid;
  grid-template-rows: 571fr 3px 458fr;
  padding-right: 5px;
  background: #f8fafd;
`;
const Pane = styled.div`display: flex; flex-direction: column; min-height: 0; padding-top: ${(p) => p.$top || 0}px;`;
const Divider = styled.div`background: #d9e0e0;`;
const SideTools = styled.div`display: flex; align-items: center; height: 32px; padding-left: 9px; background: #f5fafa;`;
const ToolBtn = styled.button`
  display: grid;
  place-items: center;
  width: 24px;
  height: 24px;
  ${(p) => p.$on && css`background: #dcdfe1; border: 1px solid #a8acae;`}
  ${(p) => p.$end && css`margin-left: auto;`}
`;
const ToolSep = styled.span`width: 1px; height: 24px; margin: 0 4px 0 4px; background: #b0b5b5;`;
const SearchRow = styled.div`display: flex; align-items: center; gap: 3px; height: 24px; background: #f5fafa;`;
const SearchBox = styled.div`
  display: flex;
  align-items: center;
  width: 272px;
  height: 24px;
  background: #fff;
  border: 1px solid #a3aaad;
  border-left: 0;
`;
const SearchInput = styled.input`flex: 1; min-width: 0; border: 0; outline: 0; background: none; font: inherit;`;
const IconBtn = styled.button`display: grid; place-items: center; width: ${(p) => p.$w}px; height: 20px;`;

const TreeArea = styled.div`
  flex: 1;
  min-height: 0;
  padding-top: 1px;
  background: linear-gradient(#e3e5e9, #e3e5e9) 46px 19px / 1px 100% no-repeat;
`;
const Tree = styled.table`
  width: 315px;
  table-layout: fixed;
  border-collapse: separate;
  border-spacing: 0;
  th {
    height: 18px;
    padding: 1px 0 0 5px;
    font-weight: 400;
    text-align: left;
    line-height: 16px;
    color: #1e1e1e;
    white-space: nowrap;
    overflow: hidden;
    background: #fbfbfc;
    border-right: 1px solid #cfd0d2;
    border-bottom: 1px solid #cfd0d2;
  }
  td { height: 16px; padding: 0; line-height: 16px; white-space: nowrap; overflow: hidden; color: #444; }
  td + td { padding-left: 1px; }
`;
const Fade = styled.div`
  width: 71px;
  overflow: hidden;
  mask-image: linear-gradient(to right, #000 60px, transparent);
`;
const Node = styled.div`margin-left: ${(p) => (p.$root ? -19 : -10)}px;`;
const InsertMark = styled.div`
  display: flex;
  align-items: center;
  width: 315px;
  height: 6px;
  margin-top: 3px;
  &::before { content: ""; flex: 1; height: 2px; background: #7cc95c; }
  &::after { content: ""; border: 3px solid transparent; border-left: 0; border-right-color: #4fae2c; }
`;
const Scroll = styled.div`display: flex; width: 315px; height: 15px;`;
const Thumb = styled.div`width: 29px; border: 1px solid #b3b5b8; border-left: 0; background: #fafbfc;`;
const Trough = styled.div`flex: ${(p) => (p.$w ? "none" : 1)}; width: ${(p) => p.$w}px; background: ${(p) => (p.$w ? "#dcdee0" : "#f5fafa")}; border: solid #d5d9db; border-width: 1px 0;`;
const ScrollBtn = styled.button`display: grid; place-items: center; width: 14px; border: 1px solid #d2d5d7; background: #eef0f1;`;
const Arrow = ({ left }) => (
  <svg width="4" height="8" viewBox="0 0 4 8" aria-hidden="true"><path d={left ? "M4 0v8L0 4z" : "M0 0v8l4-4z"} fill="#8f9294" /></svg>
);

const top = [
  ["小车.ASM", "小车.asm", ""],
  ["ASM_SIDE", "", ""],
  ["ASM_TOP", "", ""],
  ["ASM_FRONT", "", ""],
  ["START_ASM", "", ""],
  ["负载.PRT", "负载.prt", "7.38"],
  [" 轮子.PRT", "轮子.prt", "1.05"],
  ["电动机 1", "", ""],
];
const bottom = ["", "刚性主体", "重力", "连接", "电动机", "弹簧", "阻尼器", "衬套载荷", "力/扭矩", "初始条件", "终止条件", "分析", "回放"].map((n) => [n, "小车.asm", ""]);

const ModelTree = ({ rows }) => (
  <Tree>
    <colgroup>
      {[47, 80, 60, 60, 60, 8].map((w, i) => <col key={i} style={{ width: w }} />)}
    </colgroup>
    <thead>
      <tr><th /><th><Fade><T>ptc_common_n</T></Fade></th><th>材料</th><th>密度</th><th>备注</th><th /></tr>
    </thead>
    <tbody>
      {rows.map(([a, b, c], i) => (
        <tr key={i}>
          <td><Node $root={a === "小车.ASM"}><T>{a}</T></Node></td>
          <td><T>{b}</T></td><td /><td><T>{c}</T></td><td /><td />
        </tr>
      ))}
    </tbody>
  </Tree>
);

const Graphics = styled.section`position: relative; flex: 1; min-width: 0; background: #e8eaee;`;
const SceneSvg = styled.svg`display: block; width: 100%; height: 100%;`;
const ViewTools = styled.div`
  position: absolute;
  top: 7px;
  right: 415px;
  display: flex;
  align-items: center;
  height: 32px;
  padding: 0 2px;
  background: #f8f9fb;
  border: 1px solid #9a9da0;
`;
const ViewBtn = styled.button`
  display: grid;
  place-items: center;
  width: 24px;
  height: 24px;
  margin: 0 1px;
  border: 1px solid ${(p) => (p.$on ? "#a8abad" : "transparent")};
  background: ${(p) => (p.$on ? "#dcdee0" : "transparent")};
`;

const Scene = () => (
  <SceneSvg viewBox="323 146 1805 1058" preserveAspectRatio="xMinYMin meet" aria-label="3D 模型">
    <polygon points="611.5,389 1170.5,316.500 1455,492 897,564" fill="#7e888f" />
    <polygon points="611.5,389 897,564 888.500,883.500 603,707" fill="#86939b" />
    <polygon points="897,564 1455,492 1447,812 888.500,883.500" fill="#656d74" />
    <ellipse cx="1169" cy="800.500" rx="79.500" ry="67.500" transform="rotate(-59.400 1169 800.500)" fill="#5c5c5c" stroke="#111" strokeWidth="1.200" />
    <polygon points="1209,731.900 1218.500,737.400 1138.500,874.600 1129,869.100" fill="#5c5c5c" />
    <path d="M1209 731.900L1218.500 737.400M1138.500 874.600L1129 869.100" stroke="#111" strokeWidth="1.200" />
    <ellipse cx="1178.500" cy="806" rx="79.500" ry="67.500" transform="rotate(-59.400 1178.500 806)" fill="#4b4b4b" stroke="#111" strokeWidth="1.200" />
    <g fill="none" stroke="#00a59d" strokeWidth="1.200">
      <path d="M611.5 389L1170.500 316.500L1455 492L897 564zM611.500 389L603 707L888.500 883.500L897 564M888.500 883.500L1447 812L1455 492M603 707L1162.500 635.300L1447 812M1162.500 635.300L1170.500 316.500" />
      <path d="M895 632L1166 798" strokeDasharray="8 4 3 4" />
      <circle cx="875" cy="618" r="9.500" />
      <circle cx="883.500" cy="623.500" r="9.800" />
      <path d="M869 614l6 5-3 8M875 619l7-3M880 609q8 8-4 18M878 626l8-7M885 624l6 5" />
      <path d="M1164.600 774Q1164 751.500 1147 751.500C1130 752 1121.500 768 1121.500 783C1122 800 1134 809.500 1146 809.500Q1158 809 1168 800" />
      <ellipse cx="1164" cy="793" rx="7" ry="11.500" />
      <circle cx="1170" cy="800" r="9.500" />
      <path d="M1161 803l12-8M1160 805h32M1198.400 796v10M1166 808l8-16M1179 791l3 14" />
    </g>
    <circle cx="1178.500" cy="805.500" r="9.300" fill="#738790" stroke="#00a59d" strokeWidth="1.400" />
    <path d="M1171 799l14 13M1176 798l2 12M1182 797l-6 13M1170 806h16" stroke="#00a59d" fill="none" />
    <g fill="none" stroke="#c00058" strokeWidth="1.300">
      <path d="M1148 778.500h-14l7 8M1129 793l2-4 2 3M1131 789C1133 802 1139 807 1147 807Q1154 806 1160 801M1167 785l-2 8M1160 796l8 4" />
    </g>
  </SceneSvg>
);

/* ---------- dialog ---------- */
const Dialog = styled.div`
  position: absolute;
  top: 183px;
  right: -1px;
  display: flex;
  flex-direction: column;
  width: 606px;
  height: 945px;
  background: #eef0f2;
  border: 1px solid #9da0a3;
  border-radius: 8px;
  box-shadow: 0 16px 48px rgba(0, 0, 0, 0.3);
  overflow: hidden;
`;
const DlgTitle = styled.header`
  display: flex;
  align-items: center;
  height: 28px;
  padding: 0 2px 0 22px;
  background: #dadfe0;
  border-bottom: 1px solid #cdd1d2;
  color: #262626;
  h2 { flex: 1; margin: 0; text-align: center; font: 400 12px/16px ${CJK}; }
`;
const DlgTools = styled.div`
  display: flex;
  align-items: center;
  gap: 4px;
  height: 31px;
  padding-left: 9px;
  background: #f8f9f9;
  border-bottom: 1px solid #cdd3d3;
`;
const DlgBody = styled.div`flex: 1; display: flex; flex-direction: column; padding: 14px 7px 0 11px; min-height: 0;`;
const Field = styled.fieldset`
  display: flex;
  flex-direction: column;
  min-width: 0;
  margin: 0 0 ${(p) => p.$mb}px;
  padding: ${(p) => p.$pt}px 12px ${(p) => p.$pb}px;
  border: 1px solid #c3c6c9;
  ${(p) => p.$grow && css`flex: 1; min-height: 0;`}
  legend { padding: 0 4px; height: 16px; line-height: 17px; color: #262626; }
`;
const Combo = styled.div`
  display: flex;
  height: 20px;
  background: #f7f7f8;
  border: 1px solid #a5a8ab;
  select {
    flex: 1;
    appearance: none;
    border: 0;
    outline: 0;
    padding: 0 6px;
    background: none;
    font: 12px/16px ${CJK};
    color: #444;
  }
  span { display: grid; place-items: center; width: 15px; border-left: 1px solid #a5a8ab; }
`;
const MeasureRow = styled.div`flex: 1; display: flex; min-height: 0;`;
const Tools = styled.div`display: flex; flex-direction: column; gap: 6px; width: 32px; padding: 2px 0 0 4px;`;
const ToolV = styled.button`display: grid; place-items: center; width: 20px; height: 22px;`;
const ListBox = styled.div`
  flex: 1;
  min-width: 0;
  min-height: ${(p) => p.$min || 0}px;
  padding: 1px;
  background: #fff;
  border: 1px solid #a5a8ab;
  border-bottom-color: #c0c3c6;
`;
const DataTable = styled.table`
  width: 100%;
  table-layout: fixed;
  border-collapse: separate;
  border-spacing: 0;
  th {
    height: 18px;
    padding: 1px 0 0 5px;
    font-weight: 400;
    text-align: left;
    line-height: 16px;
    color: #1e1e1e;
    background: #fafafa;
    border-right: 1px solid #cfd2d4;
    border-bottom: 1px solid #cfd2d4;
  }
  td { height: 14px; padding: 0 0 0 5px; line-height: 14px; color: #444; }
`;
const DataRow = styled.tr`
  td { background: ${(p) => (p.$on ? "#afe3ff" : "#fff")}; ${(p) => p.$on && css`color: #1e1e1e;`} }
`;
const Check = styled.label`
  display: flex;
  align-items: center;
  gap: 7px;
  margin: 6px 0 0 34px;
  color: #444;
  input {
    appearance: none;
    width: 12px;
    height: 12px;
    margin: 0;
    background: #fff;
    border: 1px solid #6f7275;
  }
`;
const Splitter = styled.div`height: 5px; margin-bottom: 7px; border-top: 1px solid #dfe1e3; border-bottom: 2px solid #b9bcbe;`;
const ResultItem = styled.div`
  display: flex;
  align-items: center;
  gap: 1px;
  height: 22px;
  padding-left: 6px;
  background: #afe3ff;
  color: #262626;
`;
const DlgFoot = styled.footer`
  display: flex;
  justify-content: flex-end;
  height: 41px;
  padding: 10px 7px 0;
  border-top: 1px solid #c3c6c9;
`;
const Primary = styled.button`
  width: 44px;
  height: 20px;
  line-height: 18px;
  color: #333;
  background: #9fdfff;
  border: 1px solid #5fc4f5;
`;

/* ---------- watermark ---------- */
const Mark = styled.div`
  position: absolute;
  right: 14px;
  bottom: 6px;
  width: 172px;
  color: #000;
`;
const MarkName = styled.div`
  font: italic 300 41px/44px "Noto Sans CJK SC", sans-serif;
  white-space: nowrap;
  b { font-weight: 300; color: #ff6a35; }
`;
const MarkUrl = styled.div`font: italic 18px/20px "Liberation Sans", sans-serif; color: #909294; padding-left: 2px;`;
const Flame = styled.svg`position: absolute; left: 62px; top: -16px;`;

const quick = [
  ["page", "新建"], ["logo", "Creo"], ["#555"], ["folder", "打开"], ["save", "保存"], ["openCheck", "提交"],
  ["undo", "撤消"], ["#a9adad"], ["redo", "重做"], ["#a9adad"], ["regen", "重新生成"], ["erase", "拭除"],
  ["windows", "窗口"], ["cascade", "切换"], ["#555"], ["closeWin", "关闭窗口"],
];

export default function App() {
  return (
    <Shell>
      <Global />
      <TitleBar>
        <Quick>
          {quick.map(([k, name], i) =>
            name ? (
              <QuickBtn key={i} title={name}>{I[k]}</QuickBtn>
            ) : (
              <QuickBtn key={i} $arrow><Caret c={k} /></QuickBtn>
            )
          )}
          <QuickSep />
          <QuickBtn $arrow><Svg w={10} h={8} vb="0 0 10 8"><path d="M1 1h8" stroke="#333" /><path d="M1 3h8L5 7.500z" fill="#333" stroke="none" /></Svg></QuickBtn>
        </Quick>
        <Title><T size={12}>小车 (活动的) - Creo Parametric 10.0</T></Title>
      </TitleBar>

      <Tabs>
        <FileTab aria-label="文件" />
        {["机构", "模型", "分析", "注释", "工具", "视图", "框架", "应用程序"].map((t, i) => (
          <Tab key={t} $active={i === 0}>{t}</Tab>
        ))}
      </Tabs>

      <RibbonBar>
        <RGroup w={62} label="息" start>
          <Rows clip items={[["rMass", "质量属性", true], ["rShow", "机构显示"], ["rInfo", "详细信息", true]]} />
        </RGroup>
        <RGroup w={134} label="分析" caret>
          <BigBtn w={44} icon="mechAnalysis" label={"机构\n分析"} />
          <BigBtn w={38} icon="playback" label="回放" />
          <SubSep $gap={4} />
          <BigBtn w={46} icon="measureGraph" label="测量" />
        </RGroup>
        <RGroup w={47} label="运动">
          <BigBtn w={46} icon="drag" label={"拖动\n元件"} />
        </RGroup>
        <RGroup w={117} label="连接">
          <BigBtn w={45} icon="gears" label="齿轮" />
          <Rows items={[["cam", "凸轮"], ["contact", "3D 接触"], ["belt", "带"]]} />
        </RGroup>
        <RGroup w={202} label="插入">
          <BigBtn w={49} icon="servo" label={"伺服电\n动机"} />
          <Rows items={[["exec", "执行电动机"], ["force", "力/扭矩"], ["bushing", "衬套载荷"]]} />
          <Rows pad={7} items={[["spring", "弹簧"], ["damper", "阻尼器"]]} />
        </RGroup>
        <RGroup w={131} label="属性和条件">
          <BigBtn w={47} icon="massProps" label={"质量\n属性"} />
          <SubSep />
          <Rows pad={7} items={[["gravity", "重力"], ["initial", "初始条件"], ["stop", "终止条件"]]} />
        </RGroup>
        <RGroup w={187} label="刚性主体">
          <BigBtn w={61} icon="highlight" label={"突出显示\n刚性主体"} />
          <Rows items={[["reconnect", "重新连接"], ["redefine", "重新定义刚性主体"], ["viewBody", "查看刚性主体"]]} />
        </RGroup>
        <RGroup w={151} label="基准" caret>
          <BigBtn w={45} icon="plane" label="平面" />
          <Rows items={[["axis", "轴"], ["point", "点", false, "#a9a9a9"], ["csys", "坐标系"]]} />
          <BigBtn w={48} icon="sketch" label="草绘" />
        </RGroup>
        <RGroup w={99} label="测量" caret>
          <BigBtn w={45} on icon="distance" label="距离" />
          <Rows items={[["diameter", "直径", true], ["angle", "角度", true], ["length", "长度", true]]} />
        </RGroup>
        <RGroup w={137} label="可见性" caret>
          <BigBtn w={45} on icon="layers" label="层树" />
          <Rows items={[["hide", "隐藏"], ["unhide", "取消隐藏", false, "#5a5a5a"], ["status", "状况", false, "#a9a9a9"]]} />
        </RGroup>
        <RGroup w={46} label="关闭">
          <BigBtn w={45} on icon="close" label="关闭" />
        </RGroup>
      </RibbonBar>

      <Work>
        <Side>
          <SideInner>
            <Pane>
              <SideTools>
                <ToolBtn title="展开">{I.expand}</ToolBtn>
                <ToolBtn title="折叠">{I.collapse}</ToolBtn>
                <ToolBtn title="列" $on>{I.columns}</ToolBtn>
                <ToolSep />
                <ToolBtn title="过滤器">{I.filter}</ToolBtn>
                <ToolBtn title="树列">{I.colPage}</ToolBtn>
                <ToolSep />
                <ToolBtn title="机构">{I.gearsGray}</ToolBtn>
                <ToolBtn title="层">{I.layersS}</ToolBtn>
                <ToolBtn title="选择">{I.treePick}</ToolBtn>
                <ToolBtn title="设置" $end>{I.settings}</ToolBtn>
              </SideTools>
              <SearchRow>
                <SearchBox>
                  <SearchInput aria-label="搜索" />
                  <IconBtn $w={20} aria-label="清除"><Svg s={9}><path d="M1 1l7 7M8 1L1 8" stroke="#999" strokeWidth="1.500" /></Svg></IconBtn>
                </SearchBox>
                <IconBtn $w={12} aria-label="选项"><Caret /></IconBtn>
                <IconBtn $w={24} aria-label="添加"><Svg s={12}><path d="M6 0v12M0 6h12" stroke="#9a9da0" strokeWidth="3.500" /></Svg></IconBtn>
              </SearchRow>
              <TreeArea>
                <ModelTree rows={top} />
                <InsertMark />
              </TreeArea>
              <Scroll>
                <Thumb /><Trough $w={4} /><ScrollBtn aria-label="右"><Arrow /></ScrollBtn>
                <ScrollBtn aria-label="左"><Arrow left /></ScrollBtn><Trough /><ScrollBtn aria-label="右"><Arrow /></ScrollBtn>
              </Scroll>
            </Pane>
            <Divider />
            <Pane $top={24}>
              <TreeArea><ModelTree rows={bottom} /></TreeArea>
            </Pane>
          </SideInner>
        </Side>
        <Graphics>
          <Scene />
          <ViewTools>
            {V.map(([art, on], i) => (
              <ViewBtn key={i} $on={on}><Svg s={20}>{art}</Svg></ViewBtn>
            ))}
          </ViewTools>
        </Graphics>
      </Work>

      <Dialog role="dialog" aria-labelledby="dlg-title">
        <DlgTitle>
          <h2 id="dlg-title">测量结果</h2>
          <IconBtn $w={18} aria-label="关闭"><Svg s={9}><path d="M1 .5l7 8M8 .5l-7 8" stroke="#666" strokeWidth="2.400" /></Svg></IconBtn>
        </DlgTitle>
        <DlgTools>
          <ToolBtn title="图形">{I.graph}</ToolBtn>
          <ToolBtn title="打开">{I.folderBig}</ToolBtn>
          <ToolBtn title="传输">{I.transfer}</ToolBtn>
        </DlgTools>
        <DlgBody>
          <Field $mb={6} $pt={5} $pb={12}>
            <legend>图形类型</legend>
            <Combo>
              <select aria-label="图形类型"><option>测量与时间</option></select>
              <span><Caret /></span>
            </Combo>
          </Field>
          <Field $grow $mb={2} $pt={6} $pb={10}>
            <legend>测量</legend>
            <MeasureRow>
              <Tools>
                <ToolV title="新建">{I.pageBig}</ToolV>
                <ToolV title="编辑">{I.pencil}</ToolV>
                <ToolV title="复制">{I.copy}</ToolV>
                <ToolV title="删除">{I.del}</ToolV>
              </Tools>
              <ListBox>
                <DataTable>
                  <colgroup><col style={{ width: 110 }} /><col style={{ width: 167 }} /><col /></colgroup>
                  <thead><tr><th>名称</th><th>值</th><th>状况</th></tr></thead>
                  <tbody>
                    <DataRow><td><T>measure1</T></td><td><T>-3.43188891891</T></td><td /></DataRow>
                    <DataRow $on><td><T>measure2</T></td><td><T>-3.43188891891</T></td><td /></DataRow>
                  </tbody>
                </DataTable>
              </ListBox>
            </MeasureRow>
            <Check><input type="checkbox" />分别绘制测量图形</Check>
          </Field>
          <Splitter />
          <Field $mb={16} $pt={5} $pb={12}>
            <legend>结果集</legend>
            <ListBox $min={107}>
              <ResultItem>{I.result}<T>AnalysisDefinition4</T></ResultItem>
            </ListBox>
          </Field>
        </DlgBody>
        <DlgFoot><Primary>关闭</Primary></DlgFoot>
      </Dialog>

      <Mark>
        <MarkName><b>野火</b>论坛</MarkName>
        <Flame width="20" height="44" viewBox="0 0 20 44" aria-hidden="true">
          <path d="M5 0Q20 12 16 28Q13 38 6 42Q1 42 1 37Q10 30 10 22Q11 8 5 0ZM2 10Q12 20 7 32Q10 20 2 10Z" fill="#ff6a35" />
        </Flame>
        <MarkUrl>www.proewildfire.cn</MarkUrl>
      </Mark>
    </Shell>
  );
}
